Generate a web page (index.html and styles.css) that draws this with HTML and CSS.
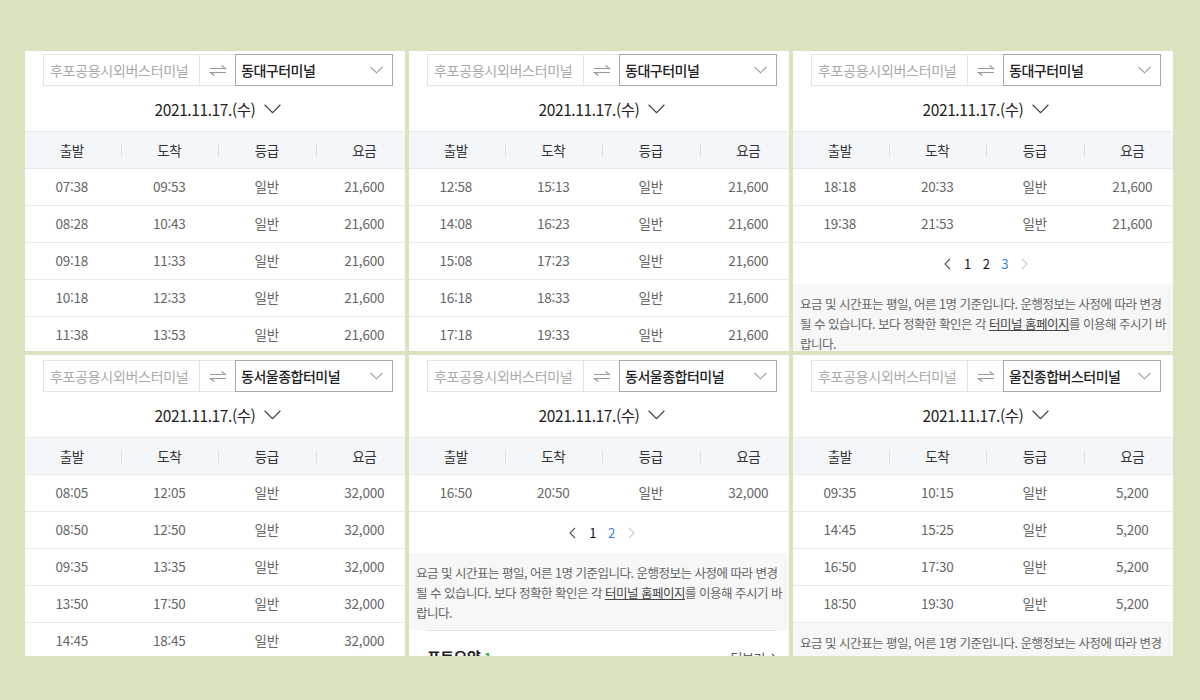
FILE: index.html
```html
<!DOCTYPE html>
<html lang="ko">
<head>
    <meta charset="UTF-8">
    <title>시외버스 시간표</title>
    <link rel="stylesheet" href="styles.css">
</head>
<body>
<div class="board">

    <!-- 1 -->
    <div class="panel">
        <div class="frame">
            <div class="search">
                <div class="from">후포공용시외버스터미널</div>
                <div class="swap"><svg width="18" height="11" viewBox="0 0 18 11"><path d="M1 3.5H16.5L12.5 0.5M17 7.5H1.5L5.5 10.5" fill="none" stroke="#999" stroke-width="1.2"/></svg></div>
                <div class="to"><span>동대구터미널</span><svg width="13" height="8" viewBox="0 0 13 8"><path d="M0.5 0.8L6.5 6.8L12.5 0.8" fill="none" stroke="#999" stroke-width="1.1"/></svg></div>
            </div>
            <div class="date">2021.11.17.(수)<svg width="17" height="10" viewBox="0 0 17 10"><path d="M0.6 0.8L8.5 8.6L16.4 0.8" fill="none" stroke="#444" stroke-width="1.2"/></svg></div>
            <table class="times">
                <thead><tr><th>출발</th><th>도착</th><th>등급</th><th>요금</th></tr></thead>
                <tbody>
                    <tr><td>07:38</td><td>09:53</td><td>일반</td><td>21,600</td></tr>
                    <tr><td>08:28</td><td>10:43</td><td>일반</td><td>21,600</td></tr>
                    <tr><td>09:18</td><td>11:33</td><td>일반</td><td>21,600</td></tr>
                    <tr><td>10:18</td><td>12:33</td><td>일반</td><td>21,600</td></tr>
                    <tr><td>11:38</td><td>13:53</td><td>일반</td><td>21,600</td></tr>
                </tbody>
            </table>
        </div>
    </div>

    <!-- 2 -->
    <div class="panel">
        <div class="frame">
            <div class="search">
                <div class="from">후포공용시외버스터미널</div>
                <div class="swap"><svg width="18" height="11" viewBox="0 0 18 11"><path d="M1 3.5H16.5L12.5 0.5M17 7.5H1.5L5.5 10.5" fill="none" stroke="#999" stroke-width="1.2"/></svg></div>
                <div class="to"><span>동대구터미널</span><svg width="13" height="8" viewBox="0 0 13 8"><path d="M0.5 0.8L6.5 6.8L12.5 0.8" fill="none" stroke="#999" stroke-width="1.1"/></svg></div>
            </div>
            <div class="date">2021.11.17.(수)<svg width="17" height="10" viewBox="0 0 17 10"><path d="M0.6 0.8L8.5 8.6L16.4 0.8" fill="none" stroke="#444" stroke-width="1.2"/></svg></div>
            <table class="times">
                <thead><tr><th>출발</th><th>도착</th><th>등급</th><th>요금</th></tr></thead>
                <tbody>
                    <tr><td>12:58</td><td>15:13</td><td>일반</td><td>21,600</td></tr>
                    <tr><td>14:08</td><td>16:23</td><td>일반</td><td>21,600</td></tr>
                    <tr><td>15:08</td><td>17:23</td><td>일반</td><td>21,600</td></tr>
                    <tr><td>16:18</td><td>18:33</td><td>일반</td><td>21,600</td></tr>
                    <tr><td>17:18</td><td>19:33</td><td>일반</td><td>21,600</td></tr>
                </tbody>
            </table>
        </div>
    </div>

    <!-- 3 -->
    <div class="panel">
        <div class="frame">
            <div class="search">
                <div class="from">후포공용시외버스터미널</div>
                <div class="swap"><svg width="18" height="11" viewBox="0 0 18 11"><path d="M1 3.5H16.5L12.5 0.5M17 7.5H1.5L5.5 10.5" fill="none" stroke="#999" stroke-width="1.2"/></svg></div>
                <div class="to"><span>동대구터미널</span><svg width="13" height="8" viewBox="0 0 13 8"><path d="M0.5 0.8L6.5 6.8L12.5 0.8" fill="none" stroke="#999" stroke-width="1.1"/></svg></div>
            </div>
            <div class="date">2021.11.17.(수)<svg width="17" height="10" viewBox="0 0 17 10"><path d="M0.6 0.8L8.5 8.6L16.4 0.8" fill="none" stroke="#444" stroke-width="1.2"/></svg></div>
            <table class="times">
                <thead><tr><th>출발</th><th>도착</th><th>등급</th><th>요금</th></tr></thead>
                <tbody>
                    <tr><td>18:18</td><td>20:33</td><td>일반</td><td>21,600</td></tr>
                    <tr><td>19:38</td><td>21:53</td><td>일반</td><td>21,600</td></tr>
                </tbody>
            </table>
            <div class="paging">
                <svg class="arrow" width="7" height="12" viewBox="0 0 7 12"><path d="M6 1L1 6L6 11" fill="none" stroke="#555" stroke-width="1.1"/></svg>
                <span>1</span><span>2</span><span class="on">3</span>
                <svg class="arrow" width="7" height="12" viewBox="0 0 7 12"><path d="M1 1L6 6L1 11" fill="none" stroke="#ccc" stroke-width="1.1"/></svg>
            </div>
            <p class="notice">요금 및 시간표는 평일, 어른 1명 기준입니다. 운행정보는 사정에 따라 변경 될 수 있습니다. 보다 정확한 확인은 각 <a>터미널 홈페이지</a>를 이용해 주시기 바랍니다.</p>
        </div>
    </div>

    <!-- 4 -->
    <div class="panel low">
        <div class="frame">
            <div class="search">
                <div class="from">후포공용시외버스터미널</div>
                <div class="swap"><svg width="18" height="11" viewBox="0 0 18 11"><path d="M1 3.5H16.5L12.5 0.5M17 7.5H1.5L5.5 10.5" fill="none" stroke="#999" stroke-width="1.2"/></svg></div>
                <div class="to"><span>동서울종합터미널</span><svg width="13" height="8" viewBox="0 0 13 8"><path d="M0.5 0.8L6.5 6.8L12.5 0.8" fill="none" stroke="#999" stroke-width="1.1"/></svg></div>
            </div>
            <div class="date">2021.11.17.(수)<svg width="17" height="10" viewBox="0 0 17 10"><path d="M0.6 0.8L8.5 8.6L16.4 0.8" fill="none" stroke="#444" stroke-width="1.2"/></svg></div>
            <table class="times">
                <thead><tr><th>출발</th><th>도착</th><th>등급</th><th>요금</th></tr></thead>
                <tbody>
                    <tr><td>08:05</td><td>12:05</td><td>일반</td><td>32,000</td></tr>
                    <tr><td>08:50</td><td>12:50</td><td>일반</td><td>32,000</td></tr>
                    <tr><td>09:35</td><td>13:35</td><td>일반</td><td>32,000</td></tr>
                    <tr><td>13:50</td><td>17:50</td><td>일반</td><td>32,000</td></tr>
                    <tr><td>14:45</td><td>18:45</td><td>일반</td><td>32,000</td></tr>
                </tbody>
            </table>
        </div>
    </div>

    <!-- 5 -->
    <div class="panel low">
        <div class="frame">
            <div class="search">
                <div class="from">후포공용시외버스터미널</div>
                <div class="swap"><svg width="18" height="11" viewBox="0 0 18 11"><path d="M1 3.5H16.5L12.5 0.5M17 7.5H1.5L5.5 10.5" fill="none" stroke="#999" stroke-width="1.2"/></svg></div>
                <div class="to"><span>동서울종합터미널</span><svg width="13" height="8" viewBox="0 0 13 8"><path d="M0.5 0.8L6.5 6.8L12.5 0.8" fill="none" stroke="#999" stroke-width="1.1"/></svg></div>
            </div>
            <div class="date">2021.11.17.(수)<svg width="17" height="10" viewBox="0 0 17 10"><path d="M0.6 0.8L8.5 8.6L16.4 0.8" fill="none" stroke="#444" stroke-width="1.2"/></svg></div>
            <table class="times">
                <thead><tr><th>출발</th><th>도착</th><th>등급</th><th>요금</th></tr></thead>
                <tbody>
                    <tr><td>16:50</td><td>20:50</td><td>일반</td><td>32,000</td></tr>
                </tbody>
            </table>
            <div class="paging">
                <svg class="arrow" width="7" height="12" viewBox="0 0 7 12"><path d="M6 1L1 6L6 11" fill="none" stroke="#555" stroke-width="1.1"/></svg>
                <span>1</span><span class="on">2</span>
                <svg class="arrow" width="7" height="12" viewBox="0 0 7 12"><path d="M1 1L6 6L1 11" fill="none" stroke="#ccc" stroke-width="1.1"/></svg>
            </div>
            <p class="notice">요금 및 시간표는 평일, 어른 1명 기준입니다. 운행정보는 사정에 따라 변경 될 수 있습니다. 보다 정확한 확인은 각 <a>터미널 홈페이지</a>를 이용해 주시기 바랍니다.</p>
            <div class="photo">
                <h3>포토요약 <em>1</em></h3>
                <span class="more">더보기 <svg width="6" height="10" viewBox="0 0 6 10"><path d="M1 1L5 5L1 9" fill="none" stroke="#555" stroke-width="1.1"/></svg></span>
            </div>
        </div>
    </div>

    <!-- 6 -->
    <div class="panel low">
        <div class="frame">
            <div class="search">
                <div class="from">후포공용시외버스터미널</div>
                <div class="swap"><svg width="18" height="11" viewBox="0 0 18 11"><path d="M1 3.5H16.5L12.5 0.5M17 7.5H1.5L5.5 10.5" fill="none" stroke="#999" stroke-width="1.2"/></svg></div>
                <div class="to"><span>울진종합버스터미널</span><svg width="13" height="8" viewBox="0 0 13 8"><path d="M0.5 0.8L6.5 6.8L12.5 0.8" fill="none" stroke="#999" stroke-width="1.1"/></svg></div>
            </div>
            <div class="date">2021.11.17.(수)<svg width="17" height="10" viewBox="0 0 17 10"><path d="M0.6 0.8L8.5 8.6L16.4 0.8" fill="none" stroke="#444" stroke-width="1.2"/></svg></div>
            <table class="times">
                <thead><tr><th>출발</th><th>도착</th><th>등급</th><th>요금</th></tr></thead>
                <tbody>
                    <tr><td>09:35</td><td>10:15</td><td>일반</td><td>5,200</td></tr>
                    <tr><td>14:45</td><td>15:25</td><td>일반</td><td>5,200</td></tr>
                    <tr><td>16:50</td><td>17:30</td><td>일반</td><td>5,200</td></tr>
                    <tr><td>18:50</td><td>19:30</td><td>일반</td><td>5,200</td></tr>
                </tbody>
            </table>
            <p class="notice">요금 및 시간표는 평일, 어른 1명 기준입니다. 운행정보는 사정에 따라 변경 될 수 있습니다. 보다 정확한 확인은 각 <a>터미널 홈페이지</a>를 이용해 주시기 바랍니다.</p>
        </div>
    </div>

</div>
</body>
</html>
```

FILE: styles.css
```css
* {
    margin: 0;
    padding: 0;
    box-sizing: border-box;
}

body {
    background: #d9e3bd;
    font-family: "Noto Sans CJK KR", "Noto Sans", sans-serif;
    letter-spacing: -0.5px;
    color: #222;
}

.board {
    display: grid;
    grid-template-columns: repeat(3, 380px);
    grid-template-rows: 300px 301px;
    gap: 4px;
    padding: 51px 0 0 25px;
}

.panel {
    background: #fff;
    overflow: hidden;
}

.frame {
    width: 390px;
    margin-left: -2px;
    padding-top: 3px;
}

.low .frame {
    padding-top: 5px;
}

/* search bar */
.search {
    display: flex;
    height: 32px;
    margin: 0 20px;
}

.from {
    width: 157px;
    border: 1px solid #e3e3e3;
    padding-left: 6px;
    font-size: 14px;
    letter-spacing: -0.3px;
    line-height: 30px;
    color: #aaa;
    white-space: nowrap;
    overflow: hidden;
}

.swap {
    width: 35px;
    border-top: 1px solid #e3e3e3;
    border-bottom: 1px solid #e3e3e3;
    display: flex;
    align-items: center;
    justify-content: center;
}

.to {
    flex: 1;
    border: 1px solid #a8a8a8;
    display: flex;
    align-items: center;
    justify-content: space-between;
    padding: 0 9px 0 5px;
    font-size: 14px;
    font-weight: 500;
    color: #222;
    white-space: nowrap;
}

/* date */
.date {
    height: 45px;
    display: flex;
    align-items: center;
    justify-content: center;
    gap: 9px;
    font-size: 15.5px;
    letter-spacing: -0.4px;
    color: #222;
}

/* timetable */
.times {
    width: 100%;
    border-collapse: collapse;
    table-layout: fixed;
    text-align: center;
}

.times th {
    height: 37px;
    background: #f4f7fa;
    border-top: 1px solid #e6eaee;
    border-bottom: 1px solid #e6eaee;
    font-size: 13.5px;
    font-weight: 400;
    color: #333;
    position: relative;
}

.times th + th::before {
    content: '';
    position: absolute;
    left: 0;
    top: 12px;
    height: 13px;
    border-left: 1px solid #dde1e5;
}

.times td {
    height: 37px;
    padding-bottom: 2px;
    border-bottom: 1px solid #ececec;
    font-size: 13.5px;
    letter-spacing: -0.2px;
    color: #666;
}

/* paging */
.paging {
    height: 41px;
    display: flex;
    align-items: center;
    justify-content: center;
    gap: 12px;
    font-size: 13px;
    color: #111;
}

.paging .on {
    color: #3c80e0;
}

.paging .arrow {
    margin: 0 1px;
}

/* notice */
.notice {
    background: #f7f7f7;
    padding: 10px 12px 7px 9px;
    font-size: 12.5px;
    line-height: 20px;
    color: #666;
}

.notice a {
    color: #444;
    text-decoration: underline;
}

/* photo summary */
.photo {
    margin: 0 20px;
    border-top: 1px solid #e5e5e5;
    padding-top: 15px;
    display: flex;
    justify-content: space-between;
    align-items: baseline;
}

.photo h3 {
    font-size: 15px;
    font-weight: 700;
    color: #222;
}

.photo em {
    font-style: normal;
    color: #27b33b;
    font-size: 13px;
}

.more {
    font-size: 13px;
    color: #555;
    display: flex;
    align-items: center;
    gap: 6px;
}
```
